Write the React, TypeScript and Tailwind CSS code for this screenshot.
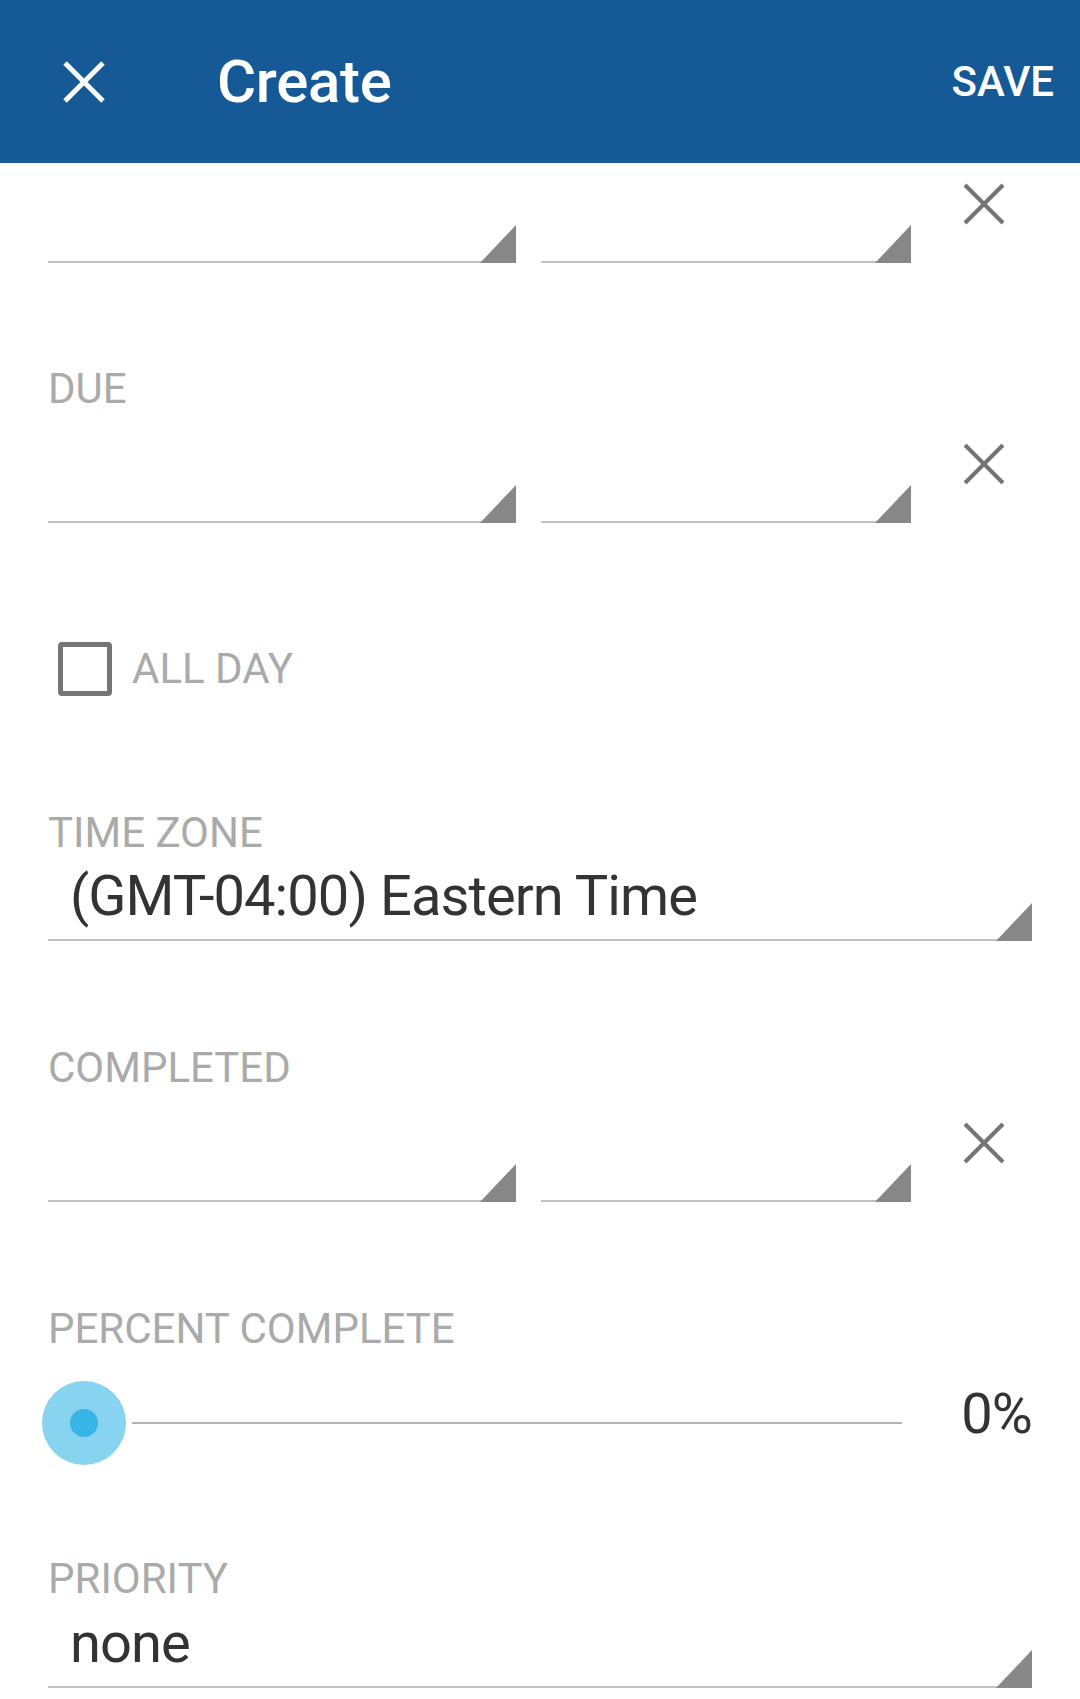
import React from "react";

const labelCls = "text-[42px] leading-none text-[#aaaaaa]";

function Corner() {
  // little dark triangle sitting on the right end of an underline
  return (
    <svg width="36" height="38" viewBox="0 0 36 38" className="-mb-[2px] shrink-0">
      <polygon points="36,0 36,38 0,38" fill="#878787" />
    </svg>
  );
}

function CloseIcon({ color, stroke }: { color: string; stroke: number }) {
  return (
    <svg width="42" height="42" viewBox="0 0 42 42" className="shrink-0">
      <line x1="2" y1="2" x2="40" y2="40" stroke={color} strokeWidth={stroke} />
      <line x1="40" y1="2" x2="2" y2="40" stroke={color} strokeWidth={stroke} />
    </svg>
  );
}

function DateRow() {
  return (
    <div className="flex h-[100px]">
      <div className="w-[468px] flex items-end justify-end border-b-2 border-[#c2c2c2]">
        <Corner />
      </div>
      <div className="ml-[25px] w-[370px] flex items-end justify-end border-b-2 border-[#c2c2c2]">
        <Corner />
      </div>
      <div className="ml-[52px] mt-[20px]">
        <CloseIcon color="#757575" stroke={4} />
      </div>
    </div>
  );
}

function SelectField({ value }: { value: string }) {
  return (
    <div className="flex items-end border-b-2 border-[#c2c2c2]">
      <span className="pl-[22px] pb-[15px] text-[56px] leading-none tracking-[-0.9px] text-[#333333]">
        {value}
      </span>
      <div className="ml-auto flex">
        <Corner />
      </div>
    </div>
  );
}

export default function App() {
  return (
    <div className="w-[1080px] h-[1699px] overflow-hidden bg-white font-['Roboto',sans-serif]">
      {/* Toolbar */}
      <div className="h-[163px] bg-[#155a96] flex items-center">
        <div className="ml-[63px]">
          <CloseIcon color="#ffffff" stroke={5} />
        </div>
        <span className="ml-[112px] text-[60px] font-medium leading-none tracking-[-0.3px] text-white">Create</span>
        <span className="ml-auto mr-[26px] text-[42px] font-medium leading-none text-white">SAVE</span>
      </div>

      <div className="px-[48px]">
        {/* Start (label scrolled off) */}
        <DateRow />

        <div className={`mt-[105px] ${labelCls}`}>DUE</div>
        <div className="mt-[13px]">
          <DateRow />
        </div>

        {/* All day */}
        <div className="mt-[119px] flex items-center">
          <div className="ml-[10px] w-[54px] h-[54px] border-[5px] border-[#757575] rounded-[4px]" />
          <span className={`ml-[20px] ${labelCls}`}>ALL DAY</span>
        </div>

        <div className={`mt-[116px] ${labelCls}`}>TIME ZONE</div>
        <div className="mt-[14px]">
          <SelectField value="(GMT-04:00) Eastern Time" />
        </div>

        <div className={`mt-[106px] ${labelCls}`}>COMPLETED</div>
        <div className="mt-[13px]">
          <DateRow />
        </div>

        <div className={`mt-[106px] ${labelCls}`}>PERCENT COMPLETE</div>
        <div className="mt-[31px] flex items-center h-[84px]">
          <div className="-ml-[6px] w-[84px] h-[84px] rounded-full bg-[#87d3f0] flex items-center justify-center">
            <div className="w-[28px] h-[28px] rounded-full bg-[#36b5e6]" />
          </div>
          <div className="ml-[6px] w-[770px] h-[2px] bg-[#b3b3b3]" />
          <span className="ml-auto self-start mt-[5px] text-[56px] leading-none tracking-[-0.9px] text-[#333333]">0%</span>
        </div>

        <div className={`mt-[93px] ${labelCls}`}>PRIORITY</div>
        <div className="mt-[15px]">
          <SelectField value="none" />
        </div>
      </div>
    </div>
  );
}
